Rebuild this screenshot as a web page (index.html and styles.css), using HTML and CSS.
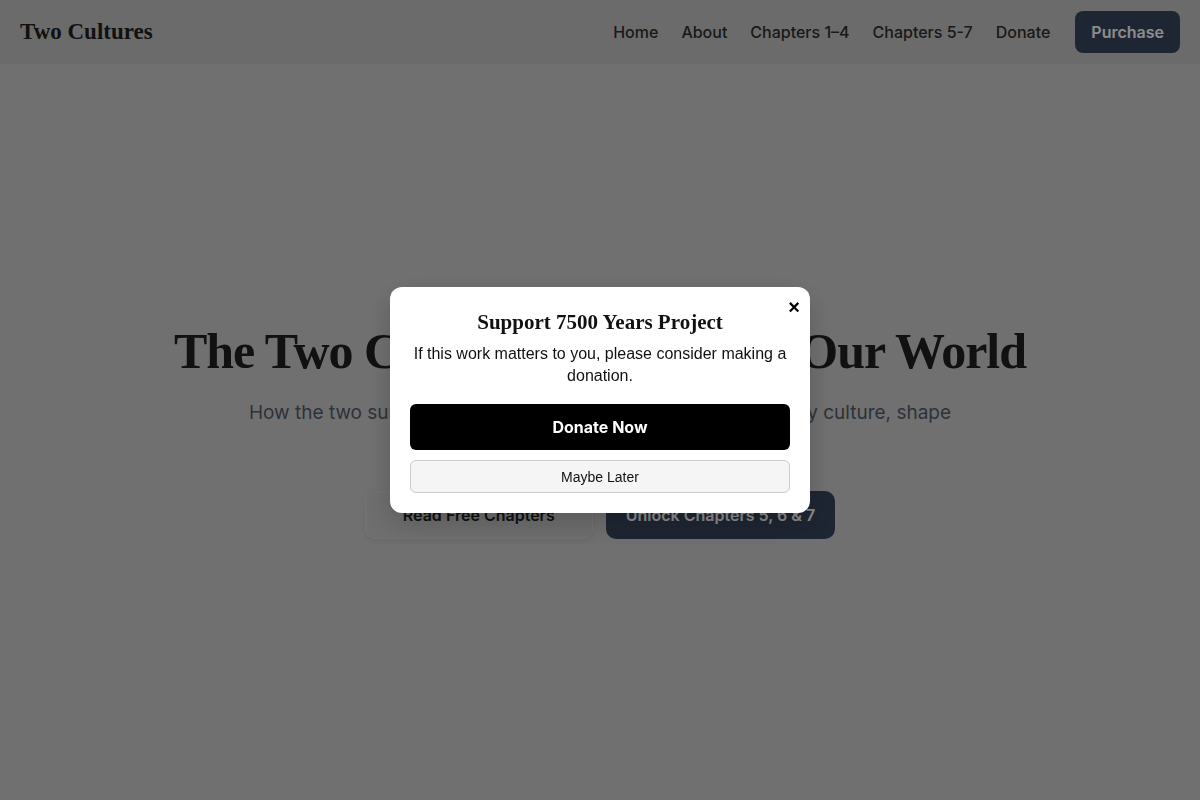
FILE: index.html
```html
<!DOCTYPE html>
<html lang="en">
<head>
<meta charset="utf-8">
<title>Two Cultures</title>
<link rel="stylesheet" href="styles.css">
</head>
<body>
<header class="site-header">
  <a class="logo" href="#">Two Cultures</a>
  <nav class="nav">
    <a href="#">Home</a>
    <a href="#">About</a>
    <a href="#">Chapters 1–4</a>
    <a href="#">Chapters 5-7</a>
    <a href="#">Donate</a>
    <a class="nav-btn" href="#">Purchase</a>
  </nav>
</header>
<main class="hero">
  <h1 class="hero-title">The Two Cultures That Shape Our World</h1>
  <p class="hero-sub">How the two survival strategies, warrior culture and community culture, shape<br>our world today.</p>
  <div class="hero-actions">
    <a class="btn btn-light" href="#">Read Free Chapters</a>
    <a class="btn btn-dark" href="#">Unlock Chapters 5, 6 &amp; 7</a>
  </div>
</main>
<div class="overlay">
  <div class="modal">
    <button class="modal-close" aria-label="Close">×</button>
    <h2 class="modal-title">Support 7500 Years Project</h2>
    <p class="modal-text">If this work matters to you, please consider making a donation.</p>
    <button class="modal-primary">Donate Now</button>
    <button class="modal-secondary">Maybe Later</button>
  </div>
</div>
</body>
</html>
```

FILE: styles.css
```css
* { box-sizing: border-box; }
html, body { margin: 0; padding: 0; }
body {
  background: #cdcdcd;
  font-family: Inter, "Liberation Sans", sans-serif;
  color: #333;
  min-height: 100vh;
}
a { text-decoration: none; color: inherit; }

.site-header {
  height: 64px;
  display: flex;
  align-items: center;
  justify-content: space-between;
  padding: 0 20px;
  background: #c4c4c4;
}
.logo {
  font-family: "Liberation Serif", serif;
  font-weight: 700;
  font-size: 23px;
  color: #1f1f1f;
}
.nav {
  display: flex;
  align-items: center;
  gap: 23px;
  font-size: 16px;
  font-weight: 500;
  color: #2e2e2e;
}
.nav-btn {
  margin-left: 2px;
  height: 42px;
  padding: 0 16px;
  display: flex;
  align-items: center;
  background: #38455d;
  color: #ffffff;
  border-radius: 8px;
  font-weight: 600;
}

.hero {
  min-height: calc(100vh - 64px);
  display: flex;
  flex-direction: column;
  align-items: center;
  justify-content: center;
  text-align: center;
  padding-bottom: 4px;
}
.hero-title {
  margin: 0;
  font-family: "Liberation Serif", serif;
  font-weight: 700;
  font-size: 50px;
  letter-spacing: -1px;
  line-height: 60px;
  color: #1f1f1f;
}
.hero-sub {
  margin: 17px 0 0;
  font-size: 19px;
  line-height: 30px;
  color: #545b6a;
}
.hero-actions {
  margin-top: 33px;
  display: flex;
  gap: 13px;
}
.btn {
  min-width: 228px;
  height: 48px;
  padding: 0 20px;
  display: flex;
  align-items: center;
  justify-content: center;
  border-radius: 10px;
  font-size: 16px;
  font-weight: 600;
}
.btn-light {
  background: #cacaca;
  border: 1px solid #d4d4d4;
  color: #1f1f1f;
  box-shadow: 0 2px 6px rgba(0,0,0,0.08);
}
.btn-dark {
  background: #38455d;
  color: #ffffff;
}

.overlay {
  position: fixed;
  inset: 0;
  background: rgba(0,0,0,0.45);
  display: flex;
  align-items: center;
  justify-content: center;
}
.modal {
  position: relative;
  width: 420px;
  background: #ffffff;
  border-radius: 12px;
  padding: 23px 20px 20px;
  text-align: center;
  font-family: "Liberation Sans", Arial, sans-serif;
  box-shadow: 0 10px 30px rgba(0,0,0,0.2);
}
.modal-close {
  position: absolute;
  top: 8px;
  right: 5px;
  width: 22px;
  height: 24px;
  padding: 0;
  border: none;
  background: none;
  font-family: "Liberation Sans", Arial, sans-serif;
  font-size: 20px;
  font-weight: 700;
  line-height: 24px;
  color: #000;
  cursor: pointer;
}
.modal-title {
  margin: 0;
  font-family: "Liberation Serif", serif;
  font-weight: 700;
  font-size: 21px;
  line-height: 24px;
  color: #111;
}
.modal-text {
  margin: 9px 0 17px;
  font-size: 16px;
  line-height: 22px;
  color: #111;
}
.modal-primary {
  display: block;
  width: 100%;
  height: 46px;
  border: none;
  border-radius: 6px;
  background: #000;
  color: #fff;
  font-family: Inter, "Liberation Sans", sans-serif;
  font-size: 16px;
  font-weight: 700;
  cursor: pointer;
}
.modal-secondary {
  display: block;
  width: 100%;
  height: 33px;
  margin-top: 10px;
  border: 1px solid #cccccc;
  border-radius: 6px;
  background: #f5f5f5;
  color: #111;
  font-family: "Liberation Sans", Arial, sans-serif;
  font-size: 14px;
  cursor: pointer;
}
```
